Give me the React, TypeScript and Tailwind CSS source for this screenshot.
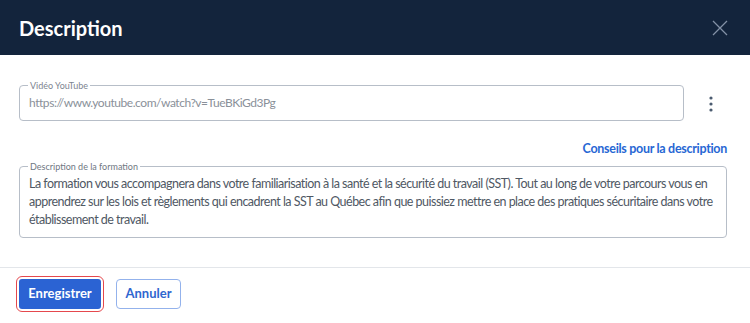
import React from "react";

export default function App() {
  return (
    <div className="w-[750px] h-[323px] bg-white font-['Lato',sans-serif] overflow-hidden">
      {/* header */}
      <div className="h-[55px] bg-[#13243c] flex items-center justify-between pl-[19px] pr-[22px]">
        <h2 className="text-[20px] font-bold text-white leading-none">Description</h2>
        <svg width="16" height="16" viewBox="0 0 16 16" className="text-[#8391a6]">
          <path d="M1 1 L15 15 M15 1 L1 15" stroke="currentColor" strokeWidth="1.3" fill="none" />
        </svg>
      </div>

      {/* body */}
      <div className="pl-[19px] pr-[23px] pt-[25px]">
        <div className="flex items-start">
          <fieldset className="flex-1 border border-[#b7bec8] rounded-[4px] pl-[9px] pr-[9px] pt-[3px] pb-[8px] min-w-0">
            <legend className="px-[2px] -ml-[1px] text-[9px] leading-[11px] text-[#7d8591]">Vidéo YouTube</legend>
            <div className="text-[12px] tracking-[-0.45px] leading-[18px] text-[#8a9099]">
              https://www.youtube.com/watch?v=TueBKiGd3Pg
            </div>
          </fieldset>
          <svg width="4" height="16" viewBox="0 0 4 16" className="ml-[25px] mr-[14px] mt-[16px] text-[#4b5b70]">
            <circle cx="2" cy="2" r="1.6" fill="currentColor" />
            <circle cx="2" cy="8" r="1.6" fill="currentColor" />
            <circle cx="2" cy="14" r="1.6" fill="currentColor" />
          </svg>
        </div>

        <div className="flex justify-end mt-[19px]">
          <a className="text-[12.5px] tracking-[-0.3px] leading-[18px] font-bold text-[#2767d4]">Conseils pour la description</a>
        </div>

        <fieldset className="mt-[3px] border border-[#b7bec8] rounded-[4px] pl-[9px] pr-[9px] pt-[3px] pb-[8px] min-w-0">
          <legend className="px-[2px] -ml-[1px] text-[9px] leading-[11px] text-[#6f7782]">Description de la formation</legend>
          <p className="text-[12.5px] tracking-[-0.52px] leading-[18px] text-[#4f5864]">
            La formation vous accompagnera dans votre familiarisation à la santé et la sécurité du travail (SST). Tout au long de votre parcours vous en apprendrez sur les lois et règlements qui encadrent la SST au Québec afin que puissiez mettre en place des pratiques sécuritaire dans votre établissement de travail.
          </p>
        </fieldset>
      </div>

      <div className="mt-[29px] border-t border-[#e3e6ea]" />

      {/* footer */}
      <div className="flex items-center gap-[15px] px-[19px] pt-[11px]">
        <button className="h-[30px] w-[82px] rounded-[3px] bg-[#2b63d3] text-white text-[13px] font-bold outline-[1.5px] outline-solid outline-offset-2 outline-[#e5484d]">
          Enregistrer
        </button>
        <button className="h-[30px] w-[65px] rounded-[4px] bg-white border border-[#93b2ec] text-[#2f66cf] text-[13px] font-bold">
          Annuler
        </button>
      </div>
    </div>
  );
}
